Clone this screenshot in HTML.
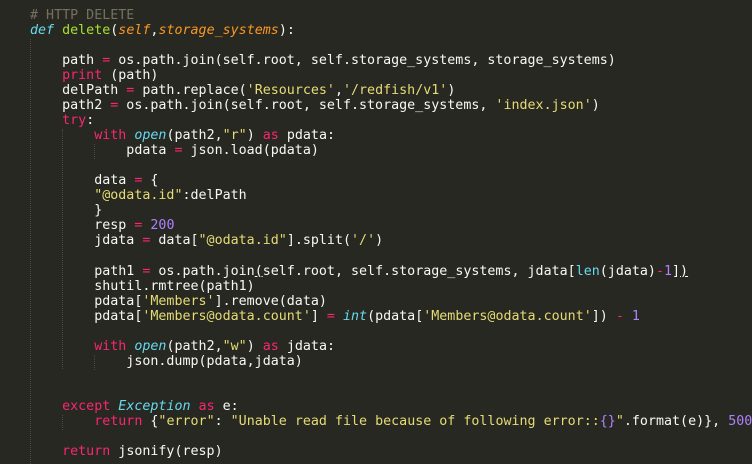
<!DOCTYPE html>
<html><head><meta charset="utf-8"><style>
html,body{margin:0;padding:0;background:#272822;width:752px;height:463px;overflow:hidden}
pre{margin:0;position:absolute;left:30px;top:7.5px;font-family:"DejaVu Sans Mono","Liberation Mono",monospace;font-size:13.33px;line-height:15.07px;color:#F8F8F2;white-space:pre}
.k{color:#F92672}.d{color:#66D9EF;font-style:italic}.b{color:#66D9EF}.f{color:#A6E22E}.p{color:#FD971F;font-style:italic}
.s{color:#E6DB74}.n{color:#AE81FF}.c{color:#75715E}
.g{position:absolute;width:0;border-left:1px dotted #4a4a44}
</style></head><body>
<div class="g" style="left:30px;top:39px;height:425px"></div>
<div class="g" style="left:62px;top:129px;height:240px"></div>
<div class="g" style="left:94px;top:144px;height:15px"></div>
<div class="g" style="left:94px;top:355px;height:15px"></div>
<div class="g" style="left:62px;top:415px;height:15px"></div>
<pre><span class="c"># HTTP DELETE</span>
<span class="d">def</span> <span class="f">delete</span>(<span class="p">self</span>,<span class="p">storage_systems</span>):

    path <span class="k">=</span> os.path.join(self.root, self.storage_systems, storage_systems)
    <span class="k">print</span> (path)
    delPath <span class="k">=</span> path.replace(<span class="s">'Resources'</span>,<span class="s">'/redfish/v1'</span>)
    path2 <span class="k">=</span> os.path.join(self.root, self.storage_systems, <span class="s">'index.json'</span>)
    <span class="k">try</span>:
        <span class="k">with</span> <span class="d">open</span>(path2,<span class="s">"r"</span>) <span class="k">as</span> pdata:
            pdata <span class="k">=</span> json.load(pdata)

        data <span class="k">=</span> {
        <span class="s">"@odata.id"</span>:delPath
        }
        resp <span class="k">=</span> <span class="n">200</span>
        jdata <span class="k">=</span> data[<span class="s">"@odata.id"</span>].split(<span class="s">'/'</span>)

        path1 <span class="k">=</span> os.path.join<u>(</u>self.root, self.storage_systems, jdata[<span class="b">len</span>(jdata)<span class="k">-</span><span class="n">1</span>]<u>)</u>
        shutil.rmtree(path1)
        pdata[<span class="s">'Members'</span>].remove(data)
        pdata[<span class="s">'Members@odata.count'</span>] <span class="k">=</span> <span class="d">int</span>(pdata[<span class="s">'Members@odata.count'</span>]) <span class="k">-</span> <span class="n">1</span>

        <span class="k">with</span> <span class="d">open</span>(path2,<span class="s">"w"</span>) <span class="k">as</span> jdata:
            json.dump(pdata,jdata)


    <span class="k">except</span> <span class="d">Exception</span> <span class="k">as</span> e:
        <span class="k">return</span> {<span class="s">"error"</span>: <span class="s">"Unable read file because of following error::<span class="n">{}</span>"</span>.format(e)}, <span class="n">500</span>

    <span class="k">return</span> jsonify(resp)</pre>
</body></html>
